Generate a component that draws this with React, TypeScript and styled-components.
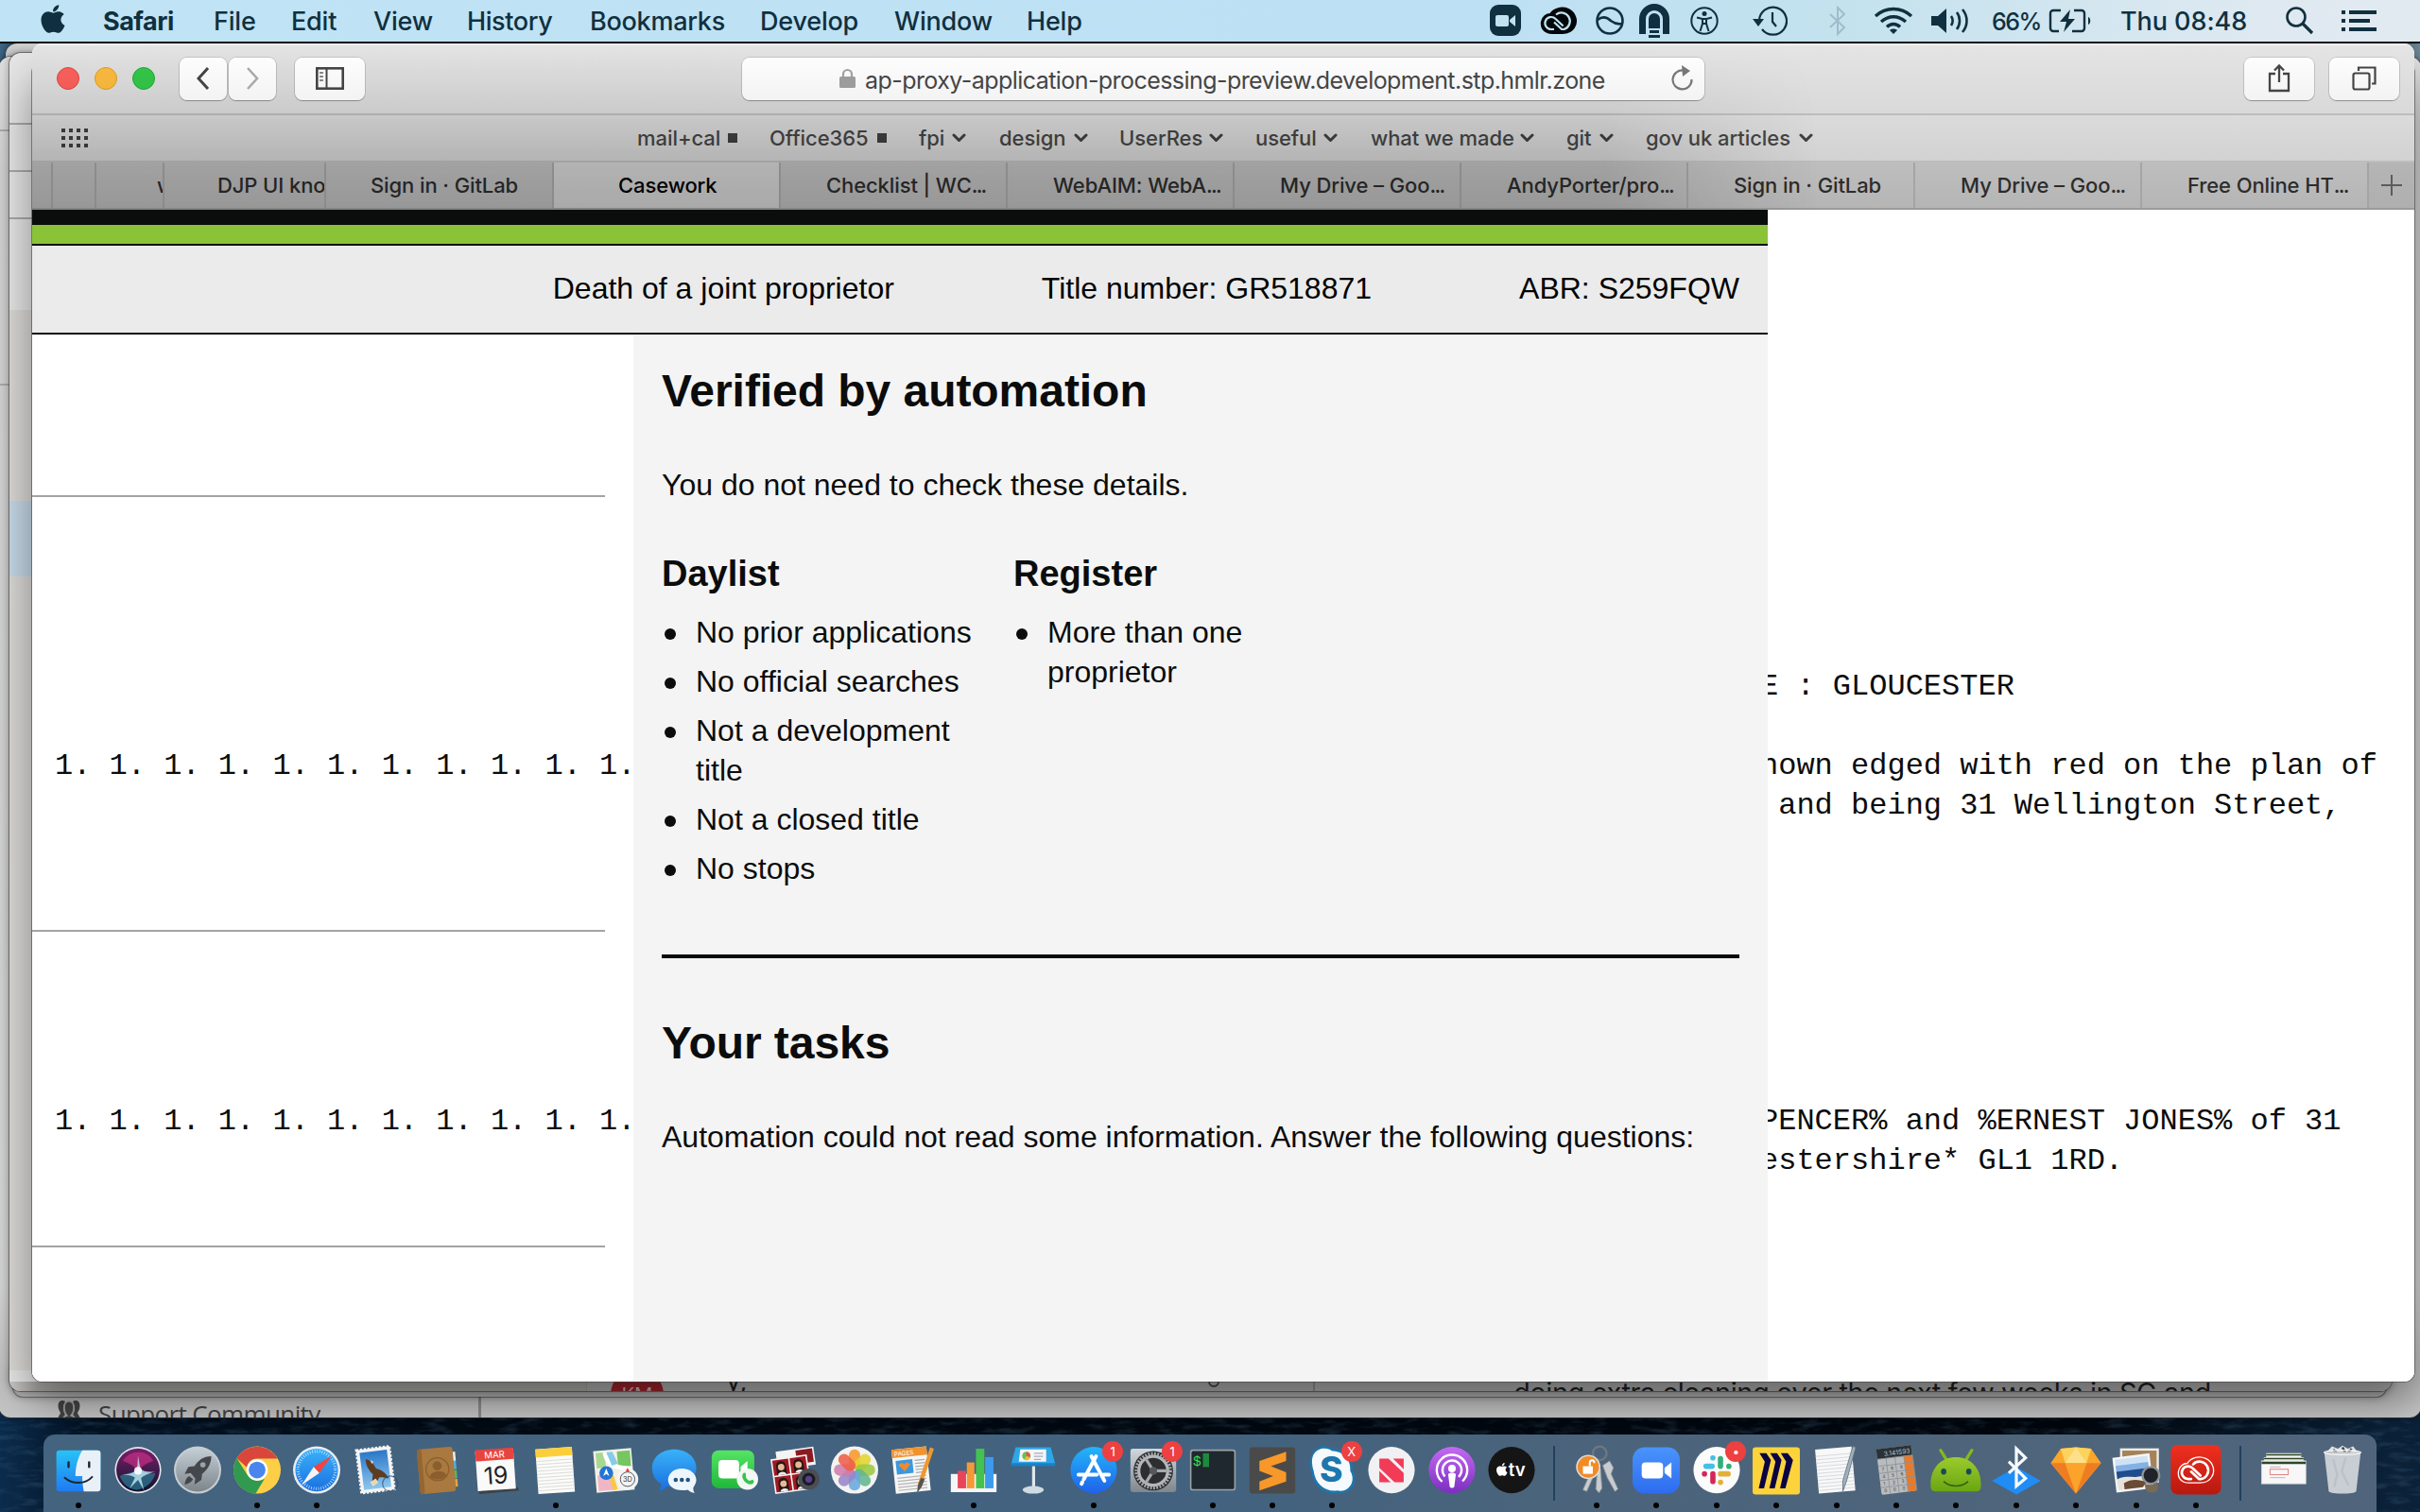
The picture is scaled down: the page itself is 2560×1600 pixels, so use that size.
import React from 'react';
import styled, { createGlobalStyle } from 'styled-components';
import { FaApple } from 'react-icons/fa';

const UI = `Inter, "Liberation Sans", sans-serif`;
const BODY = `"Liberation Sans", Arial, sans-serif`;
const MONO = `"Liberation Mono", "Courier New", monospace`;

const GlobalStyle = createGlobalStyle`
  *, *::before, *::after { box-sizing: border-box; }
  body { margin: 0; overflow: hidden; background: #02101f; }
  h1, h2, h3, p, ul { margin: 0; padding: 0; font-weight: normal; }
  svg { display: block; flex: none; }
`;

/* ---------- Desktop ---------- */
const Desktop = styled.div`
  position: relative;
  width: 2560px;
  height: 1600px;
  overflow: hidden;
  background: linear-gradient(to right, #0c2c4c 0, #031224 90px, #020a14 500px, #02070e 2200px, #0b2138 2530px);
  font-family: ${UI};
`;

const Ocean = styled.svg`
  position: absolute;
  left: 0;
  top: 1490px;
  opacity: 0.28;
`;

const SkyCorner = styled.div`
  position: absolute;
  left: 0;
  top: 44px;
  width: 2560px;
  height: 60px;
  background: linear-gradient(to right, #3f6685 0, #26465f 30px, #10202c 2500px, #6d8796 2560px);
`;

/* ---------- Menu bar ---------- */
const MenuBar = styled.header`
  position: relative;
  display: flex;
  align-items: center;
  height: 46px;
  border-bottom: 2px solid #050b12;
  background: linear-gradient(to right, #c0e4f5 0, #bde0f4 60%, #c3e2ee 76%, #dfe9f1 94%, #e2eaf1 100%);
  color: #10303f;
`;

const MenuText = styled.span<{ $w: number; $bold?: boolean; $ls?: number }>`
  width: ${p => p.$w}px;
  flex: none;
  padding-top: 2px;
  white-space: nowrap;
  font-size: 27px;
  line-height: 42px;
  font-weight: ${p => (p.$bold ? 700 : 500)};
  letter-spacing: ${p => p.$ls ?? -0.2}px;
`;

const MenuIcon = styled.span<{ $w: number; $pale?: boolean }>`
  display: flex;
  width: ${p => p.$w}px;
  flex: none;
  color: ${p => (p.$pale ? '#9fbccc' : '#10303f')};
`;

const AppleSlot = styled.span`
  display: flex;
  width: 109px;
  padding: 0 0 4px 39px;
  flex: none;
  font-size: 34px;
`;

const Spacer = styled.span<{ $w: number }>`
  flex: none;
  width: ${p => p.$w}px;
`;

/* ---------- Windows behind ---------- */
const BackWindow = styled.div<{ $l: number; $t: number; $r: number; $b: number; $bg: string; $radius?: number }>`
  position: absolute;
  left: ${p => p.$l}px;
  top: ${p => p.$t}px;
  width: ${p => p.$r - p.$l}px;
  height: ${p => p.$b - p.$t}px;
  overflow: hidden;
  border-radius: ${p => p.$radius ?? 12}px;
  background: ${p => p.$bg};
  box-shadow: 0 0 0 1px rgba(60, 60, 60, 0.55), 0 0 8px rgba(0, 0, 0, 0.35);
  display: flex;
  flex-direction: column;
`;

const EdgeBand = styled.div<{ $h: number; $c?: string; $line?: boolean }>`
  height: ${p => p.$h}px;
  flex: none;
  width: 24px;
  background: ${p => p.$c ?? 'transparent'};
  border-bottom: ${p => (p.$line ? '2px solid #a9a9a9' : '0')};
`;

const BottomStrip = styled.div<{ $h: number }>`
  margin-top: auto;
  height: ${p => p.$h}px;
  flex: none;
  display: flex;
  align-items: flex-start;
  overflow: hidden;
`;

const MailSide = styled.div`
  width: 611px;
  height: 10px;
  border-right: 1px solid #999;
  background: linear-gradient(to right, #c9c8c6, #a6a5a2 30px, #a6a5a2);
`;
const MailList = styled.div`
  display: flex;
  width: 770px;
  height: 10px;
  padding-left: 25px;
  border-right: 2px solid #8a8a8a;
  background: #aaaaaa;
`;
const Avatar = styled.span`
  width: 56px;
  height: 56px;
  margin-top: -14px;
  border-radius: 50%;
  background: #99222a;
  color: #cfb0b2;
  font: 22px/54px "Open Sans", sans-serif;
  text-align: center;
`;
const MailSnippet = styled.span`
  width: 510px;
  margin: -17px 0 0 66px;
  color: #1c1c1c;
  font: 28px/32px ${UI};
`;
const MailBadge = styled.span`
  width: 12px;
  height: 12px;
  margin-top: -6px;
  border: 2px solid #444;
  border-radius: 50%;
`;
const MailBody = styled.div`
  flex: 1;
  height: 10px;
  padding-left: 210px;
  background: #ababab;
  color: #1e1e1e;
  white-space: nowrap;
  font: 29px/34px ${UI};
`;
const BodyLine = styled.span`
  display: block;
  margin-top: -5px;
  letter-spacing: -0.43px;
`;

const SupportStrip = styled.div`
  display: flex;
  width: 510px;
  height: 26px;
  padding-left: 60px;
  gap: 17px;
  border-right: 3px solid #8b8b8b;
  color: #444;
  font: 26px/32px "Open Sans", sans-serif;
`;
const SupportLabel = styled.span`
  margin-top: 2px;
  letter-spacing: -0.62px;
`;

/* ---------- Safari window ---------- */
const SafariWindow = styled.main`
  position: absolute;
  left: 34px;
  top: 46px;
  width: 2520px;
  height: 1416px;
  display: flex;
  flex-direction: column;
  overflow: hidden;
  border-radius: 11px;
  background: #fff;
`;

const WindowShadow = styled.div`
  position: absolute;
  left: 34px;
  top: 66px;
  width: 2520px;
  height: 1396px;
  border-radius: 11px;
  box-shadow: 0 0 0 1px rgba(70, 70, 70, 0.6), 0 20px 46px rgba(0, 0, 0, 0.42);
`;

const Chrome = styled.div`
  position: relative;
  flex: none;
  height: 176px;
  &::before {
    content: '';
    position: absolute;
    inset: 0;
    background: linear-gradient(to bottom, rgba(0, 0, 0, 0), rgba(0, 0, 0, 0.06) 40%, rgba(0, 0, 0, 0.09) 46%, rgba(0, 0, 0, 0.15) 75%, rgba(0, 0, 0, 0.16));
    mask-image: linear-gradient(to right, #000 66%, transparent 75%);
  }
`;

const Toolbar = styled.div`
  display: flex;
  align-items: center;
  height: 76px;
  padding: 0 16px 0 26px;
  border-bottom: 2px solid #bdbdbd;
  background: linear-gradient(#f4f4f4, #e4e4e4 3px, #d9d9d9);
`;

const Light = styled.span<{ $c: string; $edge: string }>`
  width: 24px;
  height: 24px;
  margin-right: 16px;
  flex: none;
  border-radius: 50%;
  border: 1px solid ${p => p.$edge};
  background: ${p => p.$c};
`;

const ToolButton = styled.span<{ $w: number; $ml?: number; $c?: string }>`
  position: relative;
  display: flex;
  align-items: center;
  justify-content: center;
  width: ${p => p.$w}px;
  height: 45px;
  margin-left: ${p => p.$ml ?? 0}px;
  flex: none;
  border-radius: 8px;
  background: linear-gradient(#fdfdfd, #f3f3f3);
  box-shadow: 0 0 0 1px rgba(0, 0, 0, 0.12), 0 1px 1px rgba(0, 0, 0, 0.25);
  color: ${p => p.$c ?? '#444'};
`;

const AddressBar = styled.div`
  position: relative;
  display: flex;
  align-items: center;
  width: 1018px;
  height: 45px;
  margin-left: 399px;
  padding: 0 11px 0 103px;
  flex: none;
  border-radius: 8px;
  background: linear-gradient(#fdfdfd, #f3f3f3);
  box-shadow: 0 0 0 1px rgba(0, 0, 0, 0.12), 0 1px 1px rgba(0, 0, 0, 0.25);
  color: #454545;
`;
const Url = styled.span`
  margin-left: 10px;
  padding-top: 3px;
  flex: 1;
  white-space: nowrap;
  font-size: 25px;
  letter-spacing: -0.56px;
`;

const Favourites = styled.nav`
  display: flex;
  align-items: center;
  height: 50px;
  padding-left: 31px;
  border-bottom: 2px solid #bdbdbd;
  background: linear-gradient(#dbdbdb, #d2d2d2);
`;
const Fav = styled.span<{ $w: number; $t: number }>`
  display: flex;
  align-items: center;
  width: ${p => p.$w}px;
  flex: none;
  color: #454545;
  font-size: 22px;
  font-weight: 500;
  white-space: nowrap;
  & > b {
    width: ${p => p.$t}px;
    font-weight: inherit;
    letter-spacing: -0.06px;
  }
`;
const SquareMark = styled.i`
  width: 10px;
  height: 10px;
  margin-left: 10px;
  background: #3f3f3f;
`;

const TabStrip = styled.div`
  display: flex;
  height: 50px;
  border-bottom: 2px solid #9b9b9b;
  background: #b9b9b9;
`;
const Tab = styled.span<{ $w: number; $pl?: number; $active?: boolean }>`
  width: ${p => p.$w}px;
  flex: none;
  padding-left: ${p => p.$pl ?? 48}px;
  overflow: hidden;
  border-right: 2px solid #a5a5a5;
  background: ${p => (p.$active ? 'linear-gradient(#d2d2d2, #cacaca)' : 'linear-gradient(#bebebe, #b5b5b5)')};
  color: ${p => (p.$active ? '#000' : '#2c2c2c')};
  font-size: 22px;
  font-weight: 500;
  line-height: 49px;
  letter-spacing: -0.1px;
  white-space: nowrap;
`;
const Dots = styled.span`
  letter-spacing: -1.7px;
`;
const NewTab = styled.span`
  display: flex;
  flex: 1;
  align-items: center;
  justify-content: center;
  background: linear-gradient(#b5b5b5, #afafaf);
`;

/* ---------- Page ---------- */
const Page = styled.div`
  display: flex;
  flex-direction: column;
  flex: 1;
  background: #fff;
  color: #0b0c0c;
  font-family: ${BODY};
`;
const PageTop = styled.div`
  width: 1836px;
`;
const BlackBar = styled.div`
  height: 16px;
  background: #0b0c0c;
`;
const GreenBar = styled.div`
  height: 20px;
  background: #8ac337;
`;
const CaseHeader = styled.div`
  display: flex;
  align-items: center;
  justify-content: flex-end;
  gap: 156px;
  height: 96px;
  padding: 0 30px 2px 0;
  border-top: 2px solid #0b0c0c;
  border-bottom: 2px solid #0b0c0c;
  background: #ebebeb;
  font-size: 32px;
  line-height: 42px;
  white-space: nowrap;
  color: #000;
`;
const Columns = styled.div`
  display: grid;
  grid-template-columns: 636px 1200px 1fr;
  flex: 1;
`;
const Ledger = styled.div`
  overflow: hidden;
  font: 32px/42px ${MONO};
  white-space: pre;
`;
const LedgerBlock = styled.div<{ $h: number; $pt?: number }>`
  width: 636px;
  height: ${p => p.$h}px;
  padding: ${p => p.$pt ?? 0}px 0 0 24px;
  background: linear-gradient(#a3a3a3, #a3a3a3) left bottom / 606px 2px no-repeat;
`;
const RegisterText = styled.div`
  overflow: hidden;
  font: 32px/42px ${MONO};
  white-space: pre;
`;
const RegisterLine = styled.div<{ $mt?: number }>`
  margin: ${p => p.$mt ?? 0}px 0 0 -8px;
`;
const Panel = styled.section`
  padding: 35px 30px 0;
  background: #f4f4f4;
  font-size: 32px;
  line-height: 42px;
`;
const Heading = styled.h2`
  font-size: 48px;
  font-weight: 700;
  line-height: 50px;
  letter-spacing: -0.05px;
`;
const Copy = styled.p`
  margin-top: 53px;
  white-space: nowrap;
`;
const Checks = styled.div`
  display: flex;
  gap: 30px;
  margin-top: 52px;
`;
const CheckColumn = styled.div`
  width: 342px;
`;
const CheckTitle = styled.h3`
  font-size: 38px;
  font-weight: 700;
  line-height: 42px;
  margin-bottom: 20px;
`;
const CheckList = styled.ul`
  list-style: none;
`;
const CheckItem = styled.li`
  display: grid;
  grid-template-columns: 36px 1fr;
  margin-bottom: 10px;
  &::before {
    content: '';
    width: 12px;
    height: 12px;
    margin: 17px 0 0 3px;
    border-radius: 50%;
    background: #0b0c0c;
  }
`;
const Rule = styled.hr`
  height: 4px;
  margin: 60px 0 65px;
  border: 0;
  background: #0b0c0c;
`;

/* ---------- Dock ---------- */
const DockBar = styled.footer`
  position: absolute;
  left: 46px;
  top: 1518px;
  display: flex;
  width: 2468px;
  height: 82px;
  padding-left: 5px;
  border-radius: 12px 12px 0 0;
  background: linear-gradient(to right, #43637f, #42627f 50%, #4b647b 66%, #50657c);
`;
const DockSlot = styled.div<{ $w?: number }>`
  position: relative;
  display: flex;
  flex-direction: column;
  align-items: center;
  width: ${p => p.$w ?? 63.18}px;
  padding-top: 8px;
  flex: none;
`;
const DockDot = styled.i`
  width: 6px;
  height: 6px;
  margin-top: 4px;
  border-radius: 50%;
  background: #000;
`;
const Badge = styled.span`
  position: absolute;
  top: 7px;
  right: 0;
  width: 22px;
  height: 22px;
  border-radius: 50%;
  background: #ee4040;
  color: #fff;
  font-size: 13px;
  line-height: 22px;
  text-align: center;
`;
const Divider = styled.i<{ $ml: number; $mr: number }>`
  width: 2px;
  height: 58px;
  margin: 12px ${p => p.$mr}px 0 ${p => p.$ml}px;
  flex: none;
  background: #23405c;
`;

/* ---------- Icons ---------- */
const Chevron = () => (
  <svg width="15" height="10" viewBox="0 0 15 10">
    <path d="M2 2l5.500 5.500L13 2" fill="none" stroke="#3f3f3f" strokeWidth="3" strokeLinecap="round" strokeLinejoin="round" />
  </svg>
);

const ChevronBox = styled.span`
  margin-left: 9px;
`;
const FavLabel = ({ w, t, label, mark }: { w: number; t: number; label: string; mark?: 'square' }) => (
  <Fav $w={w} $t={t}>
    <b>{label}</b>
    {mark === 'square' ? <SquareMark /> : <ChevronBox><Chevron /></ChevronBox>}
  </Fav>
);

const People = () => (
  <svg width="28" height="26" viewBox="0 0 28 26" fill="#444">
    <path d="M2 26c0-6 3-7 3-9C1 11 2 4 7 4c2 0 3 1 3 1-3 5-2 11 0 14-2 2-3 4-3 7zM26 26c0-6-3-7-3-9 4-6 3-13-2-13-2 0-3 1-3 1 3 5 2 11 0 14 2 2 3 4 3 7z" />
    <path d="M14 5c4 0 5 3 5 7s-2 7-3 8c4 1 5 3 5 6H7c0-3 1-5 5-6-1-1-3-4-3-8s1-7 5-7z" stroke="#9a9a9a" strokeWidth="1.5" />
  </svg>
);

const range = (n: number) => Array.from({ length: n }, (_, i) => i);

const dockArt: Record<string, React.ReactNode> = {
  finder: (
    <>
      <rect x="3" y="6" width="58" height="54" rx="4" fill="url(#gFinder)" />
      <path d="M37 6h20a4 4 0 0 1 4 4v46a4 4 0 0 1-4 4H39c-1-6-2-12-2-20h-9c0-12 3-24 9-34z" fill="#eaf0f8" />
      <path d="M19 22v6M46 22v6" stroke="#1c2733" strokeWidth="3" strokeLinecap="round" />
      <path d="M14 42c10 9 27 9 36-1" fill="none" stroke="#1c2733" strokeWidth="2.4" strokeLinecap="round" />
    </>
  ),
  siri: (
    <>
      <circle cx="32" cy="32" r="30.500" fill="#e6e6ea" />
      <circle cx="32" cy="32" r="28.500" fill="url(#gSiri)" />
      <path d="M12 20c8-14 32-16 40 0-12 4-16 8-20 14-4-6-8-10-20-14z" fill="#d02f86" opacity=".65" />
      <path d="M8 40c8-4 16-4 24-8 8 4 14 6 23 4-4 14-14 20-24 22-12-1-19-8-23-18z" fill="#2f8fa5" opacity=".6" />
      <path d="M10 38c12 0 18-3 21-8l1-17 3 17c4 4 10 5 20 4-10 3-16 5-19 9l4 16-8-14-11 11 7-14c-3-3-9-4-18-4z" fill="#c9f6ff" opacity=".75" />
      <circle cx="32" cy="33" r="5" fill="#fff" opacity=".9" />
    </>
  ),
  launchpad: (
    <>
      <circle cx="32" cy="32" r="31" fill="#c6cdd2" />
      <circle cx="32" cy="32" r="28.500" fill="url(#gSilver)" />
      <path d="M50 14c-10 0-18 6-22 13l-8 1-5 9 8-1 6 7-1 8 9-6 1-8c7-5 12-13 12-23z" fill="#44484d" />
      <circle cx="39" cy="25" r="3.500" fill="#9aa3a9" />
      <path d="M21 40c-4 2-5 6-6 11 5-1 9-3 11-7z" fill="#44484d" />
    </>
  ),
  chrome: (
    <>
      <circle cx="32" cy="32" r="31" fill="#fccf46" />
      <path d="M5.200 16.500A31 31 0 0 1 59 17H32c-8 0-13 6-13 12z" fill="#d9473c" />
      <path d="M5.200 16.500A31 31 0 0 0 30 63l12-20c-8 6-19 2-23-5z" fill="#2f9a50" />
      <circle cx="32" cy="32" r="14" fill="#fff" />
      <circle cx="32" cy="32" r="11" fill="#4a86ee" />
    </>
  ),
  safari: (
    <>
      <circle cx="32" cy="32" r="31" fill="#e9edf2" />
      <circle cx="32" cy="32" r="28" fill="url(#gBlue)" />
      <circle cx="32" cy="32" r="24.500" fill="none" stroke="#cfe8ff" strokeWidth="4" strokeDasharray=".9 2.3" />
      <path d="M52 13L35.500 36 28 28z" fill="#f1453d" />
      <path d="M12 52l16-24 7.500 8z" fill="#f4f4f4" />
    </>
  ),
  mail: (
    <g transform="rotate(-7 32 32)">
      <rect x="9" y="3" width="44" height="57" fill="#f4f4f4" stroke="#f4f4f4" strokeWidth="3" strokeDasharray="3 2" />
      <rect x="13" y="7" width="36" height="49" fill="url(#gSky)" />
      <path d="M20 16c6 2 10 8 12 14 6 2 13 8 15 15-6-2-9-3-12-3l-6 8-4-5 2-8c-5-6-8-13-7-21z" fill="#5d3d22" />
      <path d="M22 47l8-4 3 6-8 4zM26 18l4 3-3 2z" fill="#e6d8b8" />
      <circle cx="48" cy="52" r="10" fill="none" stroke="#2f4f6c" strokeWidth="1.500" opacity=".7" />
    </g>
  ),
  contacts: (
    <g transform="rotate(-5 32 32)">
      <path d="M54 10h4v12h-4z" fill="#eee" />
      <path d="M54 22h4v11h-4z" fill="#4cb5d8" />
      <path d="M54 34h4v11h-4z" fill="#56b85a" />
      <path d="M54 46h4v10h-4z" fill="#e8a33c" />
      <rect x="8" y="3" width="47" height="59" rx="4" fill="#a9793f" />
      <rect x="8" y="3" width="6" height="59" rx="3" fill="#936632" />
      <circle cx="33" cy="31" r="15" fill="none" stroke="#8a5f2d" strokeWidth="1.500" />
      <circle cx="33" cy="26.500" r="6" fill="#8a5f2d" />
      <path d="M22 40c2-8 20-8 22 0-6 6-16 6-22 0z" fill="#8a5f2d" />
    </g>
  ),
  calendar: (
    <g transform="rotate(-4 32 32)">
      <path d="M6 56l52 0 2 5-52 1z" fill="#3c4247" />
      <rect x="6" y="6" width="50" height="52" fill="#fafafa" />
      <rect x="6" y="4" width="50" height="15" fill="#e8443f" />
      <text x="31" y="16" fontSize="12" textAnchor="middle" fill="#fff" fontFamily={UI}>MAR</text>
      <text x="31" y="50" fontSize="31" textAnchor="middle" fill="#222" fontFamily={UI}>19</text>
    </g>
  ),
  notes: (
    <g transform="rotate(-4 32 32)">
      <rect x="7" y="3" width="48" height="59" fill="#fbfbf8" />
      <rect x="7" y="3" width="48" height="11" fill="#fbcf3c" />
      {range(10).map(i => <path key={i} d={`M7 ${19 + i * 4.3}h48`} stroke="#d5d5d5" strokeWidth="1" />)}
    </g>
  ),
  maps: (
    <>
      <g transform="rotate(-5 30 32)">
        <rect x="5" y="5" width="50" height="55" fill="#f2efe6" />
        <rect x="36" y="8" width="17" height="22" fill="#76c661" />
        <path d="M8 8h12v20H8z" fill="#a6d98f" />
        <path d="M20 8c2 20 18 22 33 24" fill="none" stroke="#fff" strokeWidth="6" />
        <path d="M22 8h8l6 16-8 2z" fill="#86cbe8" />
        <path d="M8 38l14-6 6 26H8z" fill="#f0b6c5" />
        <path d="M24 30l6 28" stroke="#f6c945" strokeWidth="6" />
      </g>
      <circle cx="20" cy="36" r="9" fill="#1f75d8" />
      <path d="M20 30l4 10-4-3-4 3z" fill="#fff" />
      <circle cx="48" cy="44" r="14" fill="#f3f4f5" />
      <circle cx="48" cy="44" r="9.500" fill="none" stroke="#555" strokeWidth="1.200" />
      <path d="M48 29l2.500 5h-5z" fill="#e33" />
      <text x="48" y="47.500" fontSize="9" textAnchor="middle" fill="#333" fontFamily={UI}>3D</text>
    </>
  ),
  messages: (
    <>
      <path d="M31 5c17 0 29 11 29 24S48 54 31 54c-4 0-7 0-9-1-3 4-7 6-11 6 2-3 3-6 3-9C6 46 2 38 2 29 2 16 14 5 31 5z" fill="url(#gBlue)" />
      <path d="M41 30c11 0 19 7 19 15 0 4-2 7-4 10 0 2 0 5 2 7-4 0-7-2-9-4-16 3-26-4-26-13 0-8 7-15 18-15z" fill="#eef6fd" />
      <circle cx="33" cy="45" r="2.800" fill="#23527c" /><circle cx="41" cy="45" r="2.800" fill="#23527c" /><circle cx="49" cy="45" r="2.800" fill="#23527c" />
    </>
  ),
  facetime: (
    <>
      <rect x="2" y="6" width="56" height="50" rx="9" fill="url(#gGreen)" />
      <rect x="11" y="19" width="27" height="24" rx="5" fill="#fff" />
      <path d="M40 28l9-8v22l-9-7z" fill="#fff" />
      <circle cx="49" cy="44" r="14" fill="#f4f7f4" />
      <path d="M43 37c1-2 4-2 4 1l0 3c0 2 3 5 5 5l3-1c3 0 3 3 1 5-6 4-17-7-13-13z" fill="#35c54b" />
    </>
  ),
  photobooth: (
    <>
      <g transform="rotate(-8 30 32)">
        <rect x="10" y="5" width="50" height="24" fill="#f4f4f4" />
        <rect x="36" y="7" width="22" height="18" fill="#8c1a22" />
        <rect x="2" y="14" width="48" height="46" fill="#f4f4f4" />
        {range(4).map(i => (
          <g key={i} transform={`translate(${4 + (i % 2) * 23} ${16 + Math.floor(i / 2) * 22})`}>
            <rect width="21" height="20" fill="#a31822" />
            <path d="M4 20V9c0-9 13-9 13 0v11z" fill="#251815" />
            <circle cx="10.500" cy="10" r="4.300" fill="#e7b796" />
            <path d="M5 20c1-5 10-5 11 0z" fill="#eee" />
          </g>
        ))}
      </g>
      <circle cx="50" cy="44" r="14" fill="#4b4e52" />
      <circle cx="50" cy="44" r="8.500" fill="#1a1b22" /><circle cx="50" cy="44" r="4.500" fill="#5a3f87" />
    </>
  ),
  photos: (
    <>
      <circle cx="32" cy="32" r="31" fill="#f2f3f2" />
      {['#f79a2b', '#e3d52f', '#9cc840', '#63b68d', '#69a8dc', '#9a84c8', '#cf7cab', '#ef5f48'].map((c, i) => (
        <rect key={c} x="24.500" y="5" width="15" height="26" rx="7.500" fill={c} opacity=".88" transform={`rotate(${i * 45} 32 32)`} />
      ))}
    </>
  ),
  pages: (
    <>
      <g transform="rotate(-6 28 32)">
        <rect x="5" y="3" width="46" height="58" fill="#f6f6f6" />
        <rect x="5" y="3" width="46" height="11" fill="#f0932d" />
        <text x="8" y="12" fontSize="8" fill="#fff" fontFamily={UI}>PAGES</text>
        <rect x="9" y="18" width="22" height="18" fill="#3a98e0" />
        <path d="M20 33l-8-9 5-3 3 3 3-3 5 3z" fill="#f08a2c" />
        {range(5).map(i => <path key={i} d={`M34 ${20 + i * 4}h13`} stroke="#aaa" strokeWidth="1.500" />)}
        {range(5).map(i => <path key={i} d={`M9 ${41 + i * 4}h38`} stroke="#b5b5b5" strokeWidth="1.500" />)}
      </g>
      <path d="M53 2l5 2-16 48-6 10 1-12z" fill="#f0982f" /><path d="M41 42l5 2-4 10-6 8 1-10z" fill="#555" />
    </>
  ),
  numbers: (
    <>
      <path d="M2 37h60v24H2z" fill="#f5f5f5" />
      <path d="M11 33h11v23H11z" fill="#e8455a" /><path d="M23 22h10v34H23z" fill="#f49a35" />
      <path d="M35 4h11v52H35z" fill="#43c24f" /><path d="M47 15h11v41H47z" fill="#3b9bef" />
    </>
  ),
  keynote: (
    <>
      <path d="M9 2h46l6 22H3z" fill="#2ea6ea" /><path d="M3 23h58v4H3z" fill="#1d7fc0" />
      <path d="M15 5h34v16H13z" fill="#f4f6f8" />
      <circle cx="23" cy="13.500" r="5.500" fill="#5fc25a" /><path d="M23 13.500V8a5.500 5.500 0 0 1 5 7z" fill="#ef5146" /><path d="M23 13.500l5 2a5.500 5.500 0 0 1-8 3z" fill="#f4b73a" />
      <path d="M33 10h12M33 14h12M33 18h9" stroke="#aab" strokeWidth="1.500" />
      <path d="M30.500 27h4v29h-4z" fill="#dfe6ec" /><ellipse cx="32" cy="58" rx="14" ry="5" fill="#cfdae3" />
    </>
  ),
  appstore: (
    <>
      <circle cx="32" cy="32" r="30.500" fill="url(#gStore)" />
      <g stroke="#fff" strokeWidth="5" strokeLinecap="round">
        <path d="M35 14L19 44M29 14l17 32M12 38h24M45 38h7M16 50l1-2" />
      </g>
    </>
  ),
  prefs: (
    <>
      <rect x="2" y="4" width="60" height="57" rx="3" fill="url(#gMetal)" />
      <circle cx="32" cy="33" r="26" fill="#2c2e30" />
      <circle cx="32" cy="33" r="22.500" fill="none" stroke="#a5a9ac" strokeWidth="4" strokeDasharray="2.300 1.800" />
      <circle cx="32" cy="33" r="19" fill="none" stroke="#b3b7ba" strokeWidth="4" />
      <path d="M32 33h19M32 33l-10 16M32 33L22 17" stroke="#a5a9ac" strokeWidth="4" />
      <circle cx="32" cy="33" r="5" fill="#55595c" />
    </>
  ),
  terminal: (
    <>
      <rect x="2" y="5" width="60" height="54" rx="4" fill="#9aa3a6" />
      <rect x="4" y="7" width="56" height="50" rx="2" fill="#1f282e" />
      <text x="6" y="26" fontSize="18" fill="#2ee34d" fontFamily={MONO}>$</text>
      <rect x="19" y="10" width="8" height="18" fill="#1f8a3d" />
    </>
  ),
  sublime: (
    <>
      <rect x="2" y="2" width="60" height="61" rx="4" fill="#4a4a4a" />
      <path d="M50 8v12L30 27l20 8v12L15 59V47l18-7-18-7V20z" fill="#f8982a" />
    </>
  ),
  skype: (
    <>
      <path d="M18 1c6-1 12 0 15 3 16 0 27 12 26 28 3 4 4 11 2 18-3 9-12 14-22 12-17 3-32-9-34-28C1 22 3 6 18 1z" fill="#1b77ad" />
      <path d="M18 4c6-1 11 0 14 3 15 0 25 11 24 26 3 5 4 10 2 16-3 8-11 12-19 10-16 2-29-9-31-26C4 20 5 8 18 4z" fill="#f6fafd" />
      <text x="31" y="48" fontSize="46" fontWeight="800" textAnchor="middle" fill="#1b77ad" fontFamily={UI}>S</text>
    </>
  ),
  news: (
    <>
      <circle cx="32" cy="32" r="30.500" fill="#f1f1f3" />
      <path d="M16 17h12l20 19v12H36L16 29z" fill="#f23b57" />
      <path d="M34 17h14v14zM16 33v15h15z" fill="#f23b57" />
    </>
  ),
  podcasts: (
    <>
      <circle cx="32" cy="32" r="30.500" fill="url(#gPurple)" />
      <circle cx="32" cy="32" r="20" fill="none" stroke="#fff" strokeWidth="3" strokeDasharray="96 30" transform="rotate(130 32 32)" />
      <circle cx="32" cy="32" r="12.500" fill="none" stroke="#fff" strokeWidth="3" strokeDasharray="58 20" transform="rotate(138 32 32)" />
      <circle cx="32" cy="30" r="5" fill="#fff" />
      <path d="M27 38c0-3 10-3 10 0l-2 16c-1 2-5 2-6 0z" fill="#fff" />
    </>
  ),
  tv: (
    <>
      <circle cx="32" cy="32" r="30.500" fill="#151515" />
      <g transform="translate(12 21.500) scale(.038)" fill="#fff"><path d="M318.700 268.700c-.2-36.700 16.400-64.400 50-84.800-18.800-26.900-47.200-41.700-84.700-44.600-35.500-2.800-74.300 20.700-88.500 20.700-15 0-49.400-19.700-76.400-19.700C63.300 141.200 4 184.800 4 273.500q0 39.300 14.400 81.200c12.800 36.700 59 126.700 107.200 125.200 25.200-.6 43-17.900 75.800-17.900 31.800 0 48.300 17.900 76.400 17.900 48.600-.7 90.400-82.500 102.600-119.300-65.200-30.700-61.700-90-61.700-91.900zm-56.600-164.200c27.300-32.400 24.800-61.900 24-72.500-24.100 1.400-52 16.400-67.900 34.900-17.500 19.800-27.800 44.300-25.600 71.900 26.100 2 49.900-11.400 69.500-34.300z" /></g>
      <text x="28" y="39.500" fontSize="23" fontWeight="600" fill="#fff" fontFamily={UI}>tv</text>
    </>
  ),
  keychain: (
    <>
      <circle cx="36" cy="10" r="9" fill="none" stroke="#6d7881" strokeWidth="3" />
      <g fill="#c9ccce" stroke="#8d9195" strokeWidth="1">
        <path d="M33 30l4 0 2 26-4 6-4-5z" /><path d="M22 40l5 2-8 18-5-2zM40 26l9-6 5 9-3 8 9 20-4 3-10-18z" />
      </g>
      <circle cx="21" cy="28" r="15" fill="#f28a25" stroke="#dcdcdc" strokeWidth="2" />
      <rect x="14" y="27" width="13" height="10" fill="#fff" /><path d="M23 27v-4c0-5 6-5 6 0" fill="none" stroke="#fff" strokeWidth="2.500" />
    </>
  ),
  zoom: (
    <>
      <rect x="1" y="2" width="62" height="61" rx="16" fill="url(#gZoom)" />
      <rect x="13" y="22" width="28" height="21" rx="5" fill="#fff" /><path d="M43 29l9-7v21l-9-7z" fill="#fff" />
    </>
  ),
  slack: (
    <>
      <circle cx="32" cy="32" r="30.500" fill="#fbfbfb" />
      <g strokeWidth="7" strokeLinecap="round">
        <path d="M18 27h8" stroke="#44bfe8" /><path d="M27 16v.1" stroke="#44bfe8" />
        <path d="M37 17v10" stroke="#35ae79" /><path d="M48 27v.1" stroke="#35ae79" />
        <path d="M37 37h10" stroke="#e3ae3a" /><path d="M37 48v.1" stroke="#e3ae3a" />
        <path d="M27 37v10" stroke="#d42758" /><path d="M16 37v.1" stroke="#d42758" />
      </g>
    </>
  ),
  miro: (
    <>
      <rect x="1" y="2" width="62" height="62" rx="4" fill="#fdd33c" />
      <path d="M10 10h9l6 9-9 37h-7l8-35zM24 10h9l6 9-9 37h-7l8-35zM38 10h9l7 9-10 37h-7l8-35z" fill="#0a0442" />
    </>
  ),
  textedit: (
    <>
      <g transform="rotate(-5 30 32)">
        <rect x="6" y="3" width="48" height="58" fill="#f8f8f8" />
        {range(11).map(i => <path key={i} d={`M6 ${12 + i * 4.5}h48`} stroke="#cfd3d8" />)}
      </g>
      <path d="M53 1l4 1-12 44-5 14 0-14z" fill="#9fb1bf" stroke="#5f6e79" strokeWidth="1" />
    </>
  ),
  calculator: (
    <g transform="rotate(-7 32 32)">
      <rect x="9" y="2" width="46" height="60" rx="2" fill="#b9bcbf" />
      <rect x="9" y="2" width="46" height="13" fill="#2b3134" />
      <text x="53" y="12" fontSize="8.500" textAnchor="end" fill="#b7c3c9" fontFamily={UI}>3.141593</text>
      <rect x="44" y="15" width="11" height="47" fill="#e87a2c" />
      {range(5).map(i => <path key={i} d={`M9 ${15 + i * 9.4}h46`} stroke="#8d9093" />)}
      {range(4).map(i => <path key={i} d={`M${20.5 + i * 11.7} 15v47`} stroke="#8d9093" />)}
      {range(12).map(i => <text key={i} x={13 + (i % 3) * 12} y={31 + Math.floor(i / 3) * 9.4} fontSize="6" fill="#444">{'789456123000'[i]}</text>)}
    </g>
  ),
  android: (
    <>
      <path d="M12 6l8 13M53 6l-8 13" stroke="#84b81f" strokeWidth="4" strokeLinecap="round" />
      <path d="M-1 53c-1-24 14-38 33-38s34 14 33 38c0 5-2 7-6 7H5c-4 0-6-2-6-7z" fill="url(#gDroid)" />
      <ellipse cx="16" cy="34" rx="3.500" ry="4" fill="#144d58" /><ellipse cx="49" cy="34" rx="3.500" ry="4" fill="#144d58" />
      <path d="M16 47c8 8 24 8 32 0" fill="none" stroke="#33630f" strokeWidth="2" />
    </>
  ),
  bluetooth: (
    <>
      <path d="M32 28l32 18-32 18L0 46z" fill="#1f8df5" />
      <path d="M22 21l22 22-12 10V4l12 12-22 20" fill="none" stroke="#f6fafd" strokeWidth="4" strokeLinejoin="miter" />
    </>
  ),
  sketch: (
    <>
      <path d="M12 4l20-2 20 2 13 19-33 40L-1 23z" fill="#f9a62b" />
      <path d="M12 4l20-2 20 2-6 19H18z" fill="#fcd35c" /><path d="M32 2l14 21H18z" fill="#fde08a" />
      <path d="M-1 23h19l14 40z" fill="#ee7d22" /><path d="M65 23H46L32 63z" fill="#ee7d22" /><path d="M18 23h28L32 63z" fill="#fba32a" />
    </>
  ),
  preview: (
    <>
      <rect x="12" y="5" width="48" height="42" fill="#a4835a" stroke="#f0ece3" strokeWidth="3" />
      <g transform="rotate(-7 26 36)">
        <rect x="3" y="13" width="49" height="46" fill="#f6f6f6" />
        <rect x="6" y="16" width="43" height="40" fill="#cfe3f6" /><path d="M6 24h43v9H6z" fill="#84b1e4" />
        <path d="M6 32h43v10H6z" fill="#1e4c8c" /><path d="M6 42c12-6 26 4 43-2v16H6z" fill="#e6e3dc" /><path d="M14 48c10-5 20-3 30 2l-6 6H14z" fill="#6a4b34" />
      </g>
      <circle cx="51" cy="39" r="11" fill="#20242a" stroke="#8d9298" strokeWidth="3" /><path d="M43 50c4 2 12 2 17-1v9c-3 5-13 5-16 0z" fill="#7a6a55" />
    </>
  ),
  cc: (
    <>
      <rect x="-1" y="-1" width="66" height="65" rx="9" fill="url(#gRed)" />
      <g transform="translate(6.500 13) scale(1.280)" fill="none" stroke="#fff" strokeLinecap="round">
        <path d="M13 28C4 28 1 22 2 16c1-5 5-8 9-8 4-6 12-8 19-5 8 4 10 13 6 19-3 5-8 6-12 6z" strokeWidth="1.300" />
        <path d="M15 24h-3a6.500 6.500 0 1 1 4.600-11l8 7.500" strokeWidth="2.600" />
        <path d="M17 9a9 9 0 1 1 8.500 15h-2.500l-8-7.500" strokeWidth="2.600" />
      </g>
    </>
  ),
  stack: (
    <>
      <path d="M10 10h46v8H10zM7 15h52v10H7z" fill="#f4f4f2" /><path d="M10 11h46v2H10zM7 16h52v2H7z" fill="#2d4426" />
      <rect x="4" y="20" width="58" height="30" fill="#f7f7f7" stroke="#ddd" /><path d="M4 21h58v3H4z" fill="#2d4426" />
      <rect x="15" y="31" width="24" height="7" fill="none" stroke="#d66" /><path d="M15 28h14M15 42h20" stroke="#aaa" />
    </>
  ),
  trash: (
    <>
      <path d="M12 8l6-7 8 3 6-4 7 4 7-3 6 8z" fill="#dfe1e0" /><path d="M20 5l5 5M32 2l4 8M44 4l-5 6" stroke="#39424a" strokeWidth="3" />
      <path d="M8 8h48l-6 52c-3 4-33 4-36 0z" fill="#d2d6d9" opacity=".93" />
      <ellipse cx="32" cy="9" rx="24" ry="3" fill="none" stroke="#f5f5f5" strokeWidth="1.500" />
      <path d="M20 18l5 20-4 16M36 16l-5 18 9 18" fill="none" stroke="#bcc1c5" strokeWidth="3" />
    </>
  ),
};

const grad = (id: string, a: string, b: string) => (
  <linearGradient id={id} x1="0" y1="0" x2="0" y2="1">
    <stop offset="0" stopColor={a} /><stop offset="1" stopColor={b} />
  </linearGradient>
);

const DefsSvg = styled.svg`
  position: absolute;
`;
const GradientDefs = () => (
  <DefsSvg width="0" height="0">
    <defs>
      {grad('gFinder', '#27c3f6', '#1f7bf2')}{grad('gSilver', '#c3ced4', '#7d858b')}{grad('gBlue', '#39b2f8', '#1a6fe0')}
      {grad('gSky', '#2b78c8', '#8cc6ef')}{grad('gGreen', '#56e464', '#1fb83a')}{grad('gStore', '#22b5fa', '#2062ea')}
      {grad('gMetal', '#d0d8de', '#80868b')}{grad('gPurple', '#c36af2', '#7b2fc0')}{grad('gZoom', '#4a94fb', '#2d6cf0')}
      {grad('gDroid', '#9ccb2c', '#6aa513')}{grad('gRed', '#f0301f', '#b8180f')}{grad('gSiri', '#7a1f6a', '#0d1430')}
    </defs>
  </DefsSvg>
);

type App = { id: string; running?: boolean; badge?: string };
const mainApps: App[] = [
  { id: 'finder', running: true }, { id: 'siri' }, { id: 'launchpad' }, { id: 'chrome', running: true }, { id: 'safari', running: true },
  { id: 'mail' }, { id: 'contacts' }, { id: 'calendar' }, { id: 'notes', running: true }, { id: 'maps' }, { id: 'messages' },
  { id: 'facetime' }, { id: 'photobooth' }, { id: 'photos' }, { id: 'pages' }, { id: 'numbers', running: true }, { id: 'keynote' },
  { id: 'appstore', running: true, badge: '1' }, { id: 'prefs', badge: '1' }, { id: 'terminal', running: true },
  { id: 'sublime', running: true }, { id: 'skype', running: true, badge: 'X' }, { id: 'news' }, { id: 'podcasts' }, { id: 'tv' },
];
const recentApps: App[] = [
  { id: 'keychain', running: true }, { id: 'zoom', running: true }, { id: 'slack', running: true, badge: '•' }, { id: 'miro', running: true },
  { id: 'textedit', running: true }, { id: 'calculator', running: true }, { id: 'android', running: true },
  { id: 'bluetooth', running: true }, { id: 'sketch', running: true }, { id: 'preview', running: true }, { id: 'cc', running: true },
];

const DockApp = ({ app, w }: { app: App; w?: number }) => (
  <DockSlot $w={w}>
    <svg width="54" height="60" viewBox="-1.500 -2.500 67 70">{dockArt[app.id]}</svg>
    {app.badge && <Badge>{app.badge}</Badge>}
    {app.running && <DockDot />}
  </DockSlot>
);

const tabs: { label: string; w: number; pl?: number; active?: boolean; cut?: boolean }[] = [
  { label: '', w: 22 }, { label: '', w: 46 }, { label: 'w', w: 72, pl: 64 }, { label: 'DJP UI know', w: 171, pl: 56 },
  { label: 'Sign in · GitLab', w: 241, pl: 47 }, { label: 'Casework', w: 240, pl: 68, active: true }, { label: 'Checklist | WC', w: 240, cut: true },
  { label: 'WebAIM: WebA', w: 240, cut: true }, { label: 'My Drive – Goo', w: 240, cut: true }, { label: 'AndyPorter/pro', w: 240, cut: true },
  { label: 'Sign in · GitLab', w: 240 }, { label: 'My Drive – Goo', w: 240, cut: true }, { label: 'Free Online HT', w: 240, cut: true },
];

const stroke = { fill: 'none', stroke: 'currentColor', strokeWidth: 2.6 } as const;

export default function App() {
  return (
    <Desktop>
      <GlobalStyle />
      <GradientDefs />
      <Ocean width="2560" height="110">
        <filter id="waves" x="0" y="0" width="100%" height="100%">
          <feTurbulence type="fractalNoise" baseFrequency="0.04 0.14" numOctaves="4" seed="8" />
          <feColorMatrix values="0 0 0 0 .1  0 0 0 0 .25  0 0 0 0 .42  2.2 0 0 0 -1.05" />
        </filter>
        <rect width="2560" height="110" filter="url(#waves)" />
      </Ocean>
      <SkyCorner />

      <BackWindow $l={6} $t={46} $r={2530} $b={1478} $bg="#cfcfcf" />
      <BackWindow $l={-1} $t={60} $r={2561} $b={1500} $bg="linear-gradient(to bottom, #dedede 0, #d0d0d0 120px, #d4d4d4 1300px, #bebebe 1400px, #c6c6c6)">
        <EdgeBand $h={79} $line />
        <EdgeBand $h={269} $line />
        <BottomStrip $h={22}>
          <SupportStrip>
            <People />
            <SupportLabel>Support Community</SupportLabel>
          </SupportStrip>
        </BottomStrip>
      </BackWindow>
      <BackWindow $l={14} $t={1440} $r={2524} $b={1478} $bg="#b4b4b4" $radius={10} />
      <BackWindow $l={10} $t={56} $r={2530} $b={1472} $bg="#e6e6e6">
        <EdgeBand $h={76} $line />
        <EdgeBand $h={50} $line />
        <EdgeBand $h={50} $line />
        <EdgeBand $h={96} />
        <EdgeBand $h={202} $c="#dcdad7" />
        <EdgeBand $h={80} $c="#c7d9e8" />
        <EdgeBand $h={840} $c="#dcdad7" />
        <BottomStrip $h={10}>
          <MailSide />
          <MailList>
            <Avatar>KM</Avatar>
            <MailSnippet>y,</MailSnippet>
            <MailBadge />
          </MailList>
          <MailBody>
            <BodyLine>doing extra cleaning over the next few weeks in SG and</BodyLine>
          </MailBody>
        </BottomStrip>
      </BackWindow>
      <WindowShadow />

      <MenuBar>
        <AppleSlot><FaApple /></AppleSlot>
        <MenuText $w={117} $bold $ls={-0.5}>Safari</MenuText>
        <MenuText $w={82}>File</MenuText>
        <MenuText $w={87}>Edit</MenuText>
        <MenuText $w={99}>View</MenuText>
        <MenuText $w={130} $ls={-0.4}>History</MenuText>
        <MenuText $w={180} $ls={-0.25}>Bookmarks</MenuText>
        <MenuText $w={142}>Develop</MenuText>
        <MenuText $w={140}>Window</MenuText>
        <MenuText $w={58}>Help</MenuText>
        <Spacer $w={432} />
        <MenuIcon $w={53}>
          <svg width="33" height="34" viewBox="0 0 33 34"><rect width="33" height="33" rx="9" fill="currentColor" /><rect x="6" y="11" width="14" height="12" rx="2" fill="#c0e2f1" /><path d="M21 16l6-5v12l-6-5z" fill="#c0e2f1" /></svg>
        </MenuIcon>
        <MenuIcon $w={59}>
          <svg width="40" height="30" viewBox="0 0 40 30" fill="none">
            <path d="M13 28C4 28 1 22 2 16c1-5 5-8 9-8 4-6 12-8 19-5 8 4 10 13 6 19-3 5-8 6-12 6z" fill="#02060a" stroke="#02060a" strokeWidth="2" />
            <path d="M15 24h-3a6.500 6.500 0 1 1 4.600-11l8 7.500" stroke="#c0e2f1" strokeWidth="2.200" />
            <path d="M17 8.500a9 9 0 1 1 8.500 15.500h-2.500l-8-7.500" stroke="#c0e2f1" strokeWidth="2.200" />
          </svg>
        </MenuIcon>
        <MenuIcon $w={46}>
          <svg width="30" height="30" viewBox="0 0 30 30"><circle cx="15" cy="15" r="13.500" {...stroke} /><path d="M2 14c5-4 10-3 14 1 4 3 8 4 12 3" {...stroke} /></svg>
        </MenuIcon>
        <MenuIcon $w={54}>
          <svg width="32" height="36" viewBox="0 0 32 36" fill="currentColor">
            <path d="M0 32V16a16 16 0 0 1 32 0v16h-7V16a9 9 0 0 0-18 0v16z" /><path d="M10 26V16a6 6 0 0 1 12 0v10zM11 28h10v3H11zM10 33h12v3H10z" />
          </svg>
        </MenuIcon>
        <MenuIcon $w={66}>
          <svg width="30" height="30" viewBox="0 0 30 30"><circle cx="15" cy="15" r="13.700" {...stroke} strokeWidth={2} /><circle cx="15" cy="7.500" r="2.500" fill="currentColor" /><path d="M7 11.500l6 1.500v5l-2.500 8M23 11.500L17 13v5l2.500 8M13 13h4v5h-4z" {...stroke} strokeWidth={2} /></svg>
        </MenuIcon>
        <MenuIcon $w={80}>
          <svg width="37" height="32" viewBox="0 0 37 32"><path d="M7 16A14.500 14.500 0 1 1 10 25" {...stroke} strokeWidth={2.2} /><path d="M0 14h12l-6 8z" fill="currentColor" /><path d="M21 7v10l4 5" {...stroke} strokeWidth={2.2} /></svg>
        </MenuIcon>
        <MenuIcon $w={48} $pale>
          <svg width="20" height="32" viewBox="0 0 20 32"><path d="M2 9l15 14-7 7V2l7 7L2 23" {...stroke} strokeWidth={2} /></svg>
        </MenuIcon>
        <MenuIcon $w={61}>
          <svg width="42" height="30" viewBox="0 0 42 30"><path d="M2 10c11-10 27-10 38 0M8 16c8-7 18-7 26 0M14 21.500c4-4 10-4 14 0" {...stroke} strokeWidth={3.4} /><path d="M17 25c2-2 6-2 8 0l-4 4z" fill="currentColor" /></svg>
        </MenuIcon>
        <MenuIcon $w={64}>
          <svg width="44" height="30" viewBox="0 0 44 30"><path d="M0 10h7l9-8v26l-9-8H0z" fill="currentColor" /><path d="M21 10c2 3 2 7 0 10M27 6c4 5 4 13 0 18M33 3c6 7 6 17 0 24" {...stroke} /></svg>
        </MenuIcon>
        <StatusText $w={60} $ls={-1.5}>66%</StatusText>
        <MenuIcon $w={76}>
          <svg width="46" height="26" viewBox="0 0 46 26"><path d="M13 2H5a3 3 0 0 0-3 3v16a3 3 0 0 0 3 3h6M27 2h8a3 3 0 0 1 3 3v16a3 3 0 0 1-3 3H25" {...stroke} strokeWidth={2.4} /><path d="M42 9c3 1 3 7 0 8z" fill="currentColor" /><path d="M23 1l-11 13h7l-3 11 12-14h-7z" fill="currentColor" /></svg>
        </MenuIcon>
        <MenuText $w={175} $ls={-0.05}>Thu 08:48</MenuText>
        <MenuIcon $w={59}>
          <svg width="30" height="30" viewBox="0 0 30 30"><circle cx="11" cy="11" r="9.500" {...stroke} /><path d="M18 18l10 10" {...stroke} strokeWidth={3.2} /></svg>
        </MenuIcon>
        <MenuIcon $w={40}>
          <svg width="37" height="22" viewBox="0 0 37 22" fill="currentColor"><path d="M0 0h4v4H0zM8 0h29v4H8zM0 9h4v4H0zM8 9h22v4H8zM0 18h4v4H0zM8 18h29v4H8z" /></svg>
        </MenuIcon>
      </MenuBar>

      <SafariWindow>
        <Chrome>
          <Toolbar>
            <Light $c="#fc615d" $edge="#e2463f" /><Light $c="#fdbc40" $edge="#dfa023" /><Light $c="#34c84a" $edge="#25ac36" />
            <ToolButton $w={50} $ml={10}><svg width="14" height="24" viewBox="0 0 14 24"><path d="M12 1L2 12l10 11" {...stroke} strokeWidth={3} /></svg></ToolButton>
            <ToolButton $w={50} $ml={2} $c="#a9a9a9"><svg width="14" height="24" viewBox="0 0 14 24"><path d="M2 1l10 11L2 23" {...stroke} /></svg></ToolButton>
            <ToolButton $w={74} $ml={20}>
              <svg width="30" height="24" viewBox="0 0 30 24"><rect x="1.300" y="1.300" width="27.400" height="21.400" {...stroke} /><path d="M11.500 1v22" {...stroke} strokeWidth={2} /><path d="M4 6h4M4 10h4M4 14h4" stroke="#888" strokeWidth="2" /></svg>
            </ToolButton>
            <AddressBar>
              <svg width="17" height="22" viewBox="0 0 17 22"><path d="M4 10V6.500a4.500 4.500 0 0 1 9 0V10" fill="none" stroke="#a0a0a0" strokeWidth="2.200" /><rect y="9" width="17" height="12" rx="1.500" fill="#9c9c9c" /></svg>
              <Url>ap-proxy-application-processing-preview.development.stp.hmlr.zone</Url>
              <svg width="25" height="28" viewBox="0 0 25 28"><path d="M14 5.500A10 10 0 1 0 22.500 15" fill="none" stroke="#777" strokeWidth="2.200" /><path d="M12 0l9 6-8 6z" fill="#777" /></svg>
            </AddressBar>
            <ToolButton $w={74} $ml={571}>
              <svg width="24" height="32" viewBox="0 0 24 32"><path d="M8 11H2v18h20V11h-6M12 20V3M7 7.500l5-5 5 5" {...stroke} strokeWidth={2.3} /></svg>
            </ToolButton>
            <ToolButton $w={74} $ml={16}>
              <svg width="26" height="26" viewBox="0 0 26 26"><rect x="1.500" y="7.500" width="17" height="17" rx="2" {...stroke} strokeWidth={2.2} /><path d="M7 5V1.500h17.500v17H21" {...stroke} strokeWidth={2.2} /></svg>
            </ToolButton>
          </Toolbar>
          <Favourites>
            <svg width="28" height="20" viewBox="0 0 28 20" fill="#3f3f3f">
              {range(12).map(i => <rect key={i} x={(i % 4) * 8} y={Math.floor(i / 4) * 8} width="4" height="4" />)}
            </svg>
            <Spacer $w={581} />
            <FavLabel w={140} t={86} label="mail+cal" mark="square" />
            <FavLabel w={158} t={104} label="Office365" mark="square" />
            <FavLabel w={85} t={26} label="fpi" />
            <FavLabel w={127} t={70} label="design" />
            <FavLabel w={144} t={86} label="UserRes" />
            <FavLabel w={122} t={63} label="useful" />
            <FavLabel w={207} t={149} label="what we made" />
            <FavLabel w={84} t={26} label="git" />
            <FavLabel w={180} t={153} label="gov uk articles" />
          </Favourites>
          <TabStrip>
            {tabs.map((t, i) => (
              <Tab key={i} $w={t.w} $pl={t.label ? t.pl : 0} $active={t.active}>
                {t.label}{t.cut && <Dots>...</Dots>}
              </Tab>
            ))}
            <NewTab><svg width="22" height="22" viewBox="0 0 22 22"><path d="M11 0v22M0 11h22" stroke="#5c5c5c" strokeWidth="2" /></svg></NewTab>
          </TabStrip>
        </Chrome>

        <Page>
          <PageTop>
            <BlackBar />
            <GreenBar />
            <CaseHeader>
              <span>Death of a joint proprietor</span>
              <span>Title number: GR518871</span>
              <span>ABR: S259FQW</span>
            </CaseHeader>
          </PageTop>
          <Columns>
            <Ledger>
              <LedgerBlock $h={172} />
              <LedgerBlock $h={460} $pt={264}>{'1. '.repeat(11).trim()}</LedgerBlock>
              <LedgerBlock $h={334} $pt={180}>{'1. '.repeat(11).trim()}</LedgerBlock>
            </Ledger>
            <Panel>
              <Heading>Verified by automation</Heading>
              <Copy>You do not need to check these details.</Copy>
              <Checks>
                <CheckColumn>
                  <CheckTitle>Daylist</CheckTitle>
                  <CheckList>
                    <CheckItem>No prior applications</CheckItem>
                    <CheckItem>No official searches</CheckItem>
                    <CheckItem>Not a development title</CheckItem>
                    <CheckItem>Not a closed title</CheckItem>
                    <CheckItem>No stops</CheckItem>
                  </CheckList>
                </CheckColumn>
                <CheckColumn>
                  <CheckTitle>Register</CheckTitle>
                  <CheckList>
                    <CheckItem>More than one proprietor</CheckItem>
                  </CheckList>
                </CheckColumn>
              </Checks>
              <Rule />
              <Heading>Your tasks</Heading>
              <Copy>Automation could not read some information. Answer the following questions:</Copy>
            </Panel>
            <RegisterText>
              <RegisterLine $mt={352}>E : GLOUCESTER</RegisterLine>
              <RegisterLine $mt={42}>hown edged with red on the plan of</RegisterLine>
              <RegisterLine> and being 31 Wellington Street,</RegisterLine>
              <RegisterLine $mt={292}>PENCER% and %ERNEST JONES% of 31</RegisterLine>
              <RegisterLine>estershire* GL1 1RD.</RegisterLine>
            </RegisterText>
          </Columns>
        </Page>
      </SafariWindow>

      <DockBar>
        {mainApps.map(a => <DockApp key={a.id} app={a} />)}
        <Divider $ml={13} $mr={12} />
        {recentApps.map(a => <DockApp key={a.id} app={a} w={63.4} />)}
        <Divider $ml={14} $mr={13} />
        <DockApp app={{ id: 'stack' }} />
        <DockApp app={{ id: 'trash' }} />
      </DockBar>
    </Desktop>
  );
}

const StatusText = styled(MenuText)`
  font-size: 25px;
`;
